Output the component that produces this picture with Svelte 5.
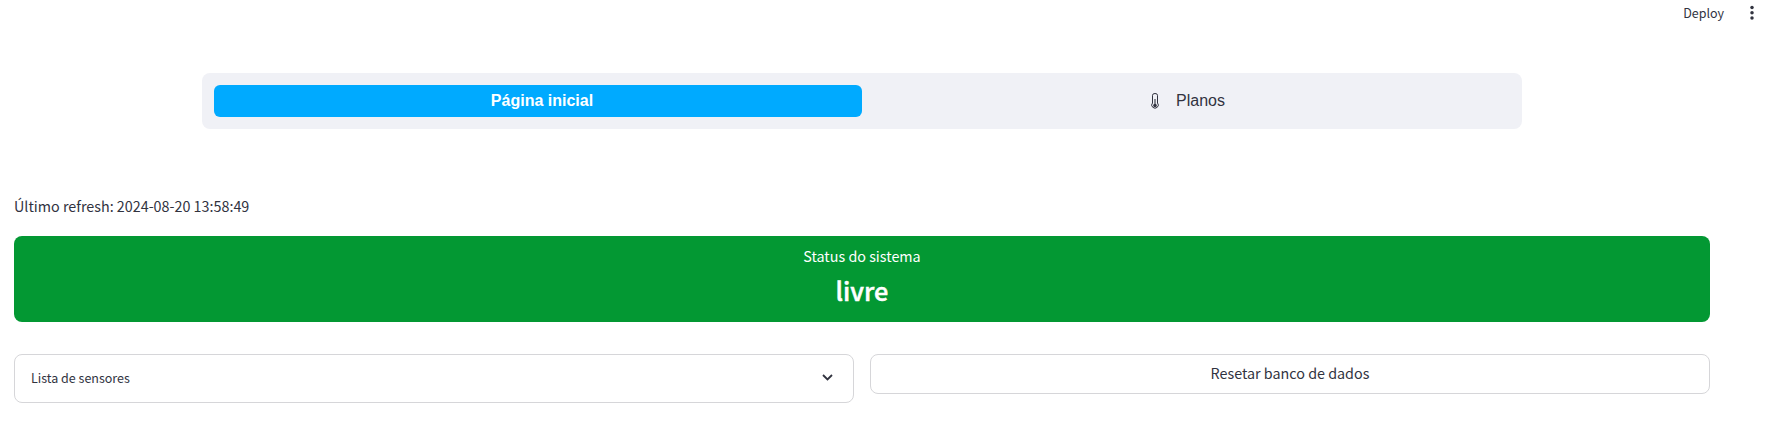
<script>
  const refreshed = '2024-08-20 13:58:49';
  const status = 'livre';
</script>

<div class="app">
  <header>
    <span class="deploy">Deploy</span>
    <svg class="dots" width="4" height="16" viewBox="0 0 4 16" fill="#31333f">
      <circle cx="2" cy="2.5" r="1.75" />
      <circle cx="2" cy="7.75" r="1.75" />
      <circle cx="2" cy="13" r="1.75" />
    </svg>
  </header>
  <main>
    <nav>
      <a class="tab active"><span>Página inicial</span></a>
      <a class="tab">
        <svg width="8" height="16" viewBox="0 0 8 16" fill="none" stroke="#31333f">
          <path d="M1.5 10V2.3a2.5 1.8 0 0 1 5 0V10a3.3 3.1 0 1 1-5 0Z" stroke-width="1" />
          <path d="M4 6v6" stroke-width="1.1" />
          <circle cx="4" cy="12.5" r="1.8" fill="#31333f" stroke="none" />
        </svg>
        <span>Planos</span>
      </a>
    </nav>
    <p class="refresh">Último refresh: {refreshed}</p>
    <section class="status">
      <div class="label">Status do sistema</div>
      <div class="value">{status}</div>
    </section>
    <div class="columns">
      <div class="expander">
        <span>Lista de sensores</span>
        <svg width="11" height="7" viewBox="0 0 11 7" fill="none" stroke="#31333f" stroke-width="1.8">
          <path d="M1 1 5.5 5.4 10 1" />
        </svg>
      </div>
      <button>Resetar banco de dados</button>
    </div>
  </main>
</div>

<style>
  .app {
    height: 439px;
    box-sizing: border-box;
    background: #fff;
    color: #31333f;
    font: 14.33px/24px "Noto Sans CJK JP", sans-serif;
  }
  header {
    height: 26px;
    display: flex;
    justify-content: flex-end;
    align-items: center;
    gap: 26px;
    padding-right: 11px;
  }
  .deploy { font-size: 12.5px; }
  main { padding: 47px 55px 0 14px; }
  nav {
    box-sizing: border-box;
    width: 1320px;
    height: 56px;
    margin: 0 auto;
    padding: 12px;
    display: flex;
    border-radius: 8px;
    background: #f0f1f6;
    font: 16px/32px "Liberation Sans", Arial, sans-serif;
  }
  .tab {
    flex: 0 0 50%;
    box-sizing: border-box;
    display: flex;
    justify-content: center;
    align-items: center;
    gap: 17px;
    padding-left: 4px;
    border-radius: 6px;
  }
  .active { padding-left: 8px; background: #00aaff; color: #fff; font-weight: 700; }
  .refresh { margin: 65px 0 18px; }
  .status {
    height: 86px;
    box-sizing: border-box;
    padding-top: 8px;
    border-radius: 8px;
    background: #039833;
    color: #fff;
    text-align: center;
  }
  .value { font-size: 25.2px; line-height: 44px; font-weight: 500; -webkit-text-stroke: 0.5px #fff; }
  .columns {
    margin-top: 32px;
    display: grid;
    grid-template-columns: 1fr 1fr;
    align-items: start;
    gap: 16px;
  }
  .expander, button {
    box-sizing: border-box;
    border: 1px solid #d6d6d9;
    border-radius: 8px;
    background: #fff;
  }
  .expander {
    height: 49px;
    display: flex;
    align-items: center;
    justify-content: space-between;
    padding: 0 20px 2px 16px;
    font-size: 12.5px;
  }
  button {
    height: 40px;
    padding: 0 0 2px;
    color: inherit;
    font: inherit;
  }
</style>
